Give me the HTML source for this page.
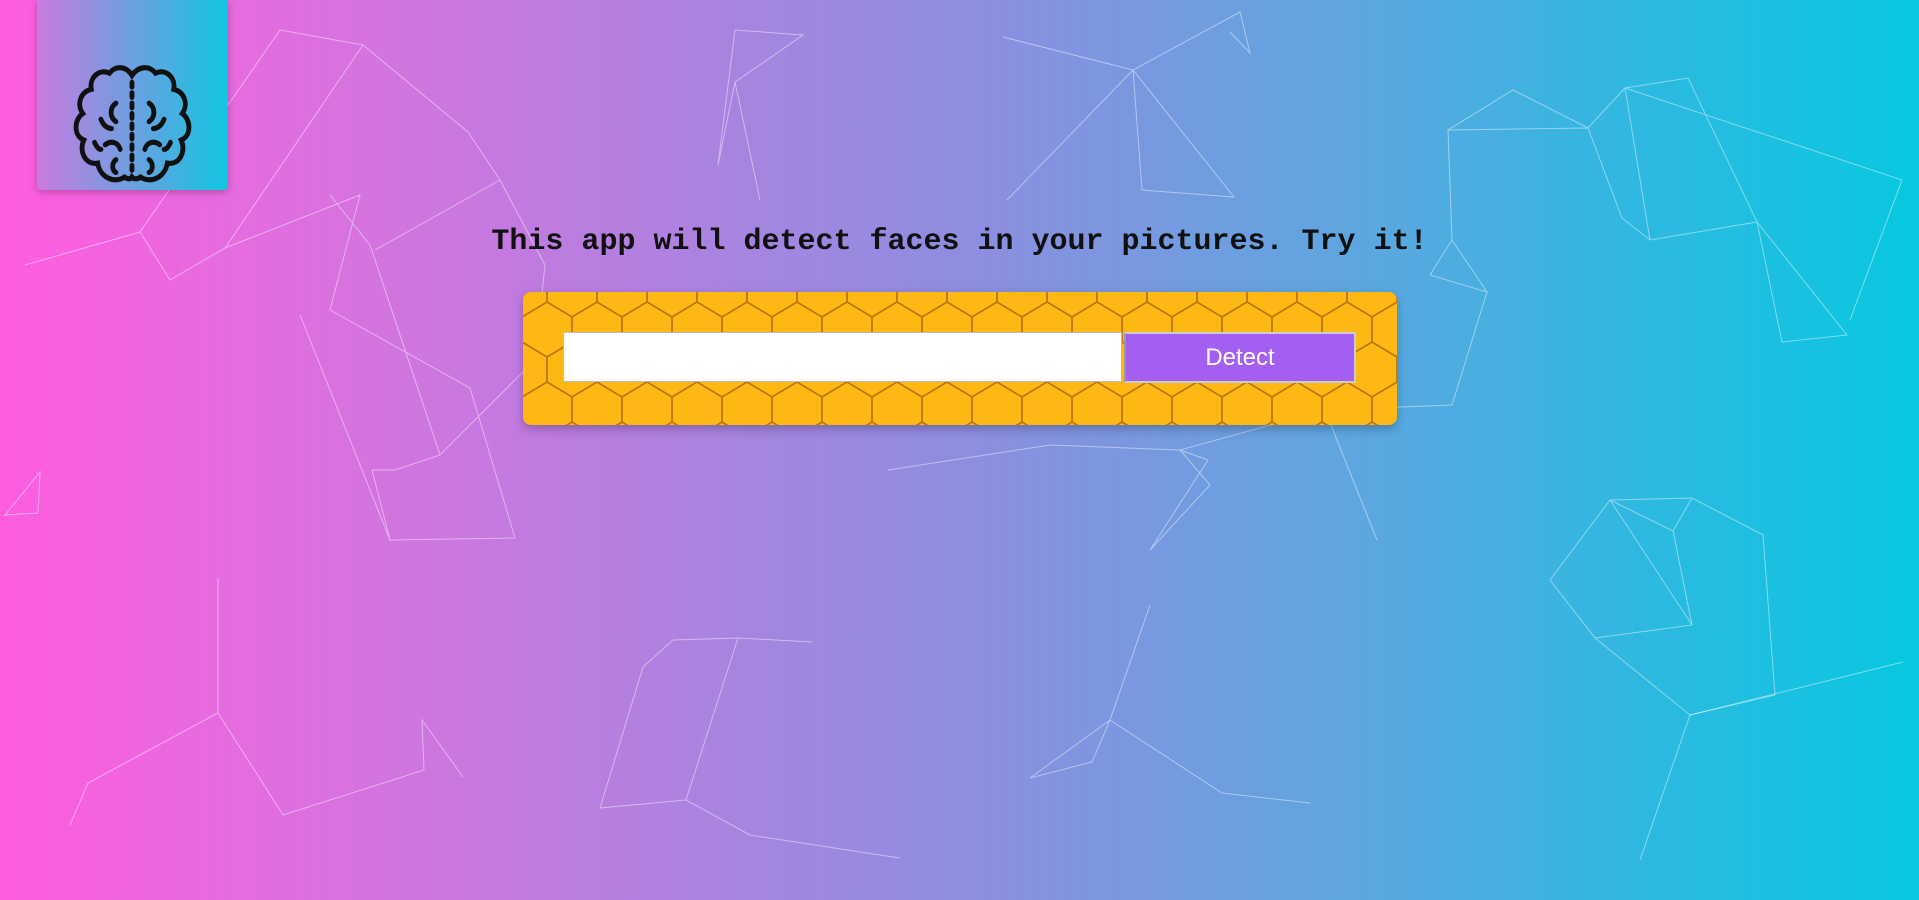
<!DOCTYPE html>
<html><head><meta charset="utf-8"><style>
html,body{margin:0;padding:0;width:1919px;height:900px;overflow:hidden}
body{background:linear-gradient(90deg,#ff5ce0 0%,#d872e0 18%,#a884e0 38%,#8a8fe0 52%,#5aa8e0 72%,#2fb8e0 85%,#08c8e0 100%);position:relative;font-family:"Liberation Sans",sans-serif}
#net{position:absolute;left:0;top:0}
.logo{position:absolute;left:37px;top:0;width:191px;height:190px;background:linear-gradient(90deg,#c97ae0,#10c6e0);box-shadow:0 2px 8px rgba(0,0,0,.25);border-radius:0 0 4px 4px}
.title{position:absolute;left:0;width:1919px;top:225px;text-align:center;font-family:"Liberation Mono","Courier New",monospace;font-weight:bold;font-size:30px;color:#111;white-space:nowrap}
.panel{position:absolute;left:523px;top:292px;width:874px;height:133px;border-radius:8px;background:#fdb813;overflow:hidden;box-shadow:0 4px 10px rgba(0,0,0,.25)}
.inp{position:absolute;left:40px;top:40px;width:559px;height:50px;background:#fff;border:1px solid #bbb;box-sizing:border-box}
.btn{position:absolute;left:601px;top:40px;width:232px;height:51px;background:#a55ff0;color:#fff;font-size:24px;text-align:center;line-height:48px;border:2px solid #ccc;border-left-color:#999;box-sizing:border-box}
</style></head><body>
<svg id="net" width="1919" height="900" stroke="rgba(255,255,255,0.45)" stroke-width="1" fill="none">
<path d="M25 265 L140 232 L280 30 L363 45 L468 132 L500 180 L545 265 L535 360 L440 455 L395 470 L372 470 L390 540 L515 538 L470 388 L330 310 L360 195 L225 248 L170 280 L140 232 M225 248 L363 45 M330 195 L370 245 L440 455 M300 315 L390 540 M500 180 L375 250"/>
<path d="M5 515 L40 472 L38 513 Z"/>
<path d="M735 30 L803 35 L735 82 L718 165 L735 30 M735 82 L760 200"/>
<path d="M1003 37 L1133 70 L1142 190 L1234 197 L1133 70 L1240 12 L1250 53 L1230 32 M1133 70 L1007 200"/>
<path d="M1448 130 L1513 90 L1588 128 L1625 88 L1688 78 L1757 222 L1847 335 L1782 342 L1757 222 L1650 240 L1622 218 L1588 128 L1448 130 L1452 240 L1430 275 L1487 292 L1452 240 M1650 240 L1625 88 L1902 180 L1850 320 M1487 292 L1452 405 L1325 410 L1180 450 L1208 460 L1150 550 L1210 485 L1180 450 M1325 410 L1377 540"/>
<path d="M1550 580 L1610 500 L1692 498 L1763 535 L1775 695 L1690 715 L1595 638 Z M1610 500 L1673 531 L1692 498 M1673 531 L1692 625 L1595 638 M1610 500 L1692 625"/>
<path d="M1150 605 L1110 720 L1030 778 L1092 762 L1110 720 L1222 793 L1310 803 M888 470 L1050 445 L1180 450"/>
<path d="M643 667 L673 640 L738 638 L812 642 M643 667 L600 808 L686 800 L750 835 L900 858 M686 800 L738 638"/>
<path d="M218 578 L218 713 L88 783 L70 825 M218 713 L283 815 L424 770 L422 720 L463 777"/>
<path d="M1903 662 L1690 715 L1640 860"/>
</svg>
<div class="logo">
<svg width="191" height="190" viewBox="0 0 191 190" fill="none" stroke="#111" stroke-width="4.5" stroke-linecap="round">
<g transform="translate(95.5 124.5) scale(1.07 1.155) translate(-95.5 -114.5)">
<path d="M95 72 C90 64 80 63 74 70 C64 66 55 74 57 84 C47 86 43 97 49 105 C41 110 40 124 50 128 C45 138 52 150 63 148 C65 160 78 166 88 160 C91 162 94 162 95 160 C97 162 100 162 103 160 C113 166 126 160 128 148 C139 150 146 138 141 128 C151 124 150 110 142 105 C148 97 144 86 134 84 C136 74 127 66 117 70 C111 63 101 64 95 72 Z"/>
<path d="M95 78 V155" stroke-dasharray="4 5"/>
<path d="M80 96 C74 100 74 108 80 112 M111 96 C117 100 117 108 111 112 M66 110 C68 115 72 118 76 118 M125 110 C123 115 119 118 115 118 M70 132 C76 128 82 130 84 136 M121 132 C115 128 109 130 107 136 M80 145 C76 148 76 154 80 156 M111 145 C115 148 115 154 111 156 M60 130 C62 134 64 136 66 136 M131 130 C129 134 127 136 125 136"/>
</g>
</svg>
</div>
<div class="title">This app will detect faces in your pictures. Try it!</div>
<div class="panel">
<svg width="874" height="133" style="position:absolute;left:0;top:0">
<defs><pattern id="hx" width="50" height="80" patternUnits="userSpaceOnUse" x="24" y="-15">
<path d="M0 0 V25 L25 40 L50 25 V0 M25 40 V65 L0 80 M25 65 L50 80" fill="none" stroke="#bf7508" stroke-width="1.8"/>
</pattern></defs>
<rect width="874" height="133" fill="url(#hx)"/>
</svg>
<div class="inp"></div>
<div class="btn">Detect</div>
</div>
</body></html>
